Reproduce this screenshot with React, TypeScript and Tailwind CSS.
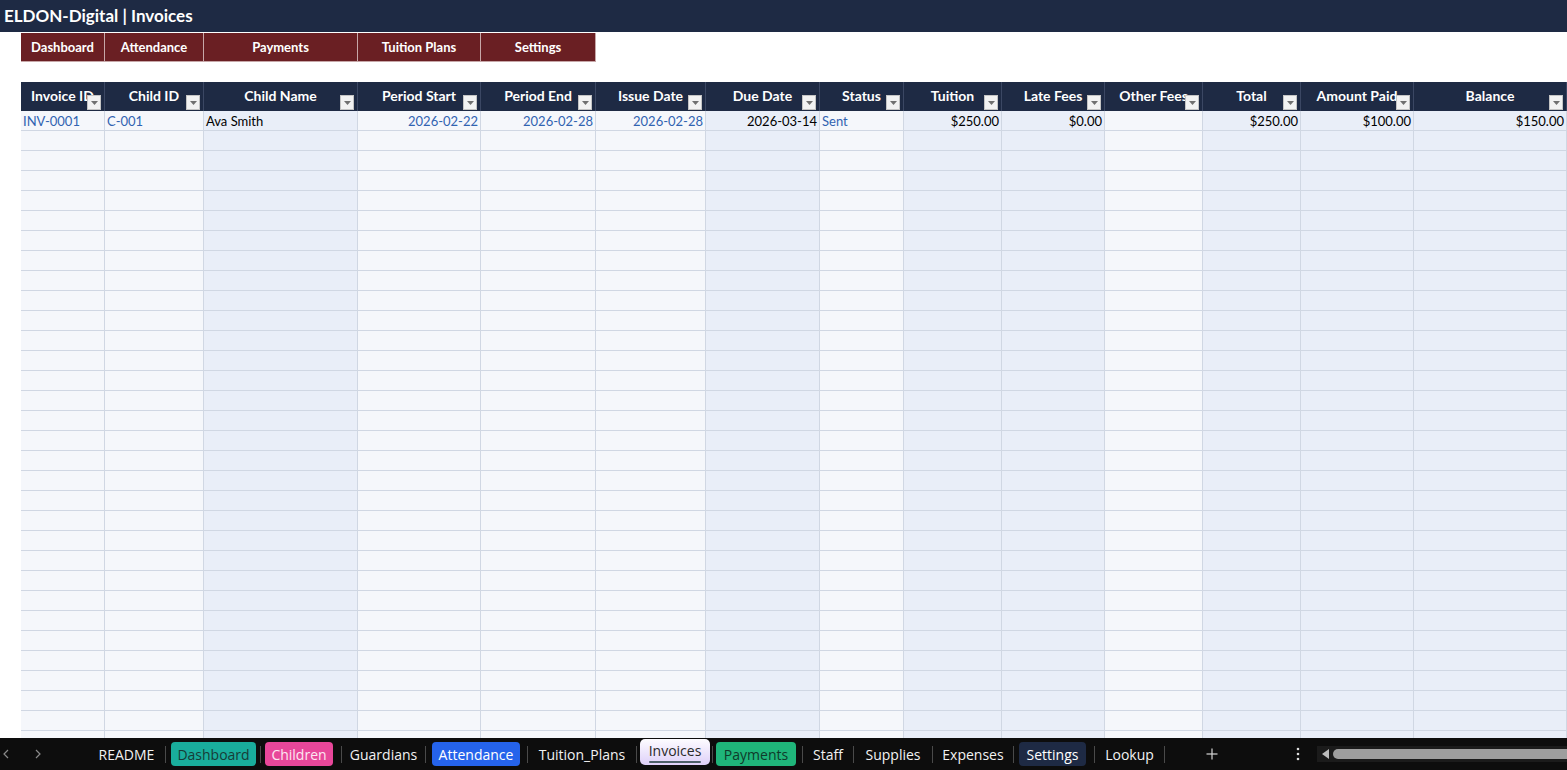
import React from 'react';

type Col = {
  name: string;
  w: string;
  shade: boolean;
};

const cols: Col[] = [
  { name: 'Invoice ID', w: 'w-[84px]', shade: false },
  { name: 'Child ID', w: 'w-[99px]', shade: false },
  { name: 'Child Name', w: 'w-[154px]', shade: true },
  { name: 'Period Start', w: 'w-[123px]', shade: false },
  { name: 'Period End', w: 'w-[115px]', shade: false },
  { name: 'Issue Date', w: 'w-[110px]', shade: false },
  { name: 'Due Date', w: 'w-[114px]', shade: true },
  { name: 'Status', w: 'w-[84px]', shade: false },
  { name: 'Tuition', w: 'w-[98px]', shade: true },
  { name: 'Late Fees', w: 'w-[103px]', shade: true },
  { name: 'Other Fees', w: 'w-[98px]', shade: false },
  { name: 'Total', w: 'w-[98px]', shade: true },
  { name: 'Amount Paid', w: 'w-[113px]', shade: true },
  { name: 'Balance', w: 'w-[153px]', shade: true },
];

// first invoice row: [text, right aligned, blue]
const firstRow: [string, boolean, boolean][] = [
  ['INV-0001', false, true],
  ['C-001', false, true],
  ['Ava Smith', false, false],
  ['2026-02-22', true, true],
  ['2026-02-28', true, true],
  ['2026-02-28', true, true],
  ['2026-03-14', true, false],
  ['Sent', false, true],
  ['$250.00', true, false],
  ['$0.00', true, false],
  ['', true, false],
  ['$250.00', true, false],
  ['$100.00', true, false],
  ['$150.00', true, false],
];

const navButtons = [
  { label: 'Dashboard', w: 'w-[84px]' },
  { label: 'Attendance', w: 'w-[99px]' },
  { label: 'Payments', w: 'w-[154px]' },
  { label: 'Tuition Plans', w: 'w-[123px]' },
  { label: 'Settings', w: 'w-[115px]' },
];

type Tab = {
  label: string;
  w: string;
  pill?: string;
  active?: boolean;
};

const tabs: Tab[] = [
  { label: 'README', w: 'w-[77px]' },
  { label: 'Dashboard', w: 'w-[94px]', pill: 'bg-[#19ad9c] text-[#173c37] ml-[5px] mr-[4px]' },
  { label: 'Children', w: 'w-[80px]', pill: 'bg-[#e8479a] text-[#fde7f2] ml-[4px] mr-[8px]' },
  { label: 'Guardians', w: 'w-[83px]' },
  { label: 'Attendance', w: 'w-[101px]', pill: 'bg-[#2563eb] text-white ml-[6px] mr-[7px]' },
  { label: 'Tuition_Plans', w: 'w-[108px]' },
  { label: 'Invoices', w: 'w-[74px]', active: true },
  { label: 'Payments', w: 'w-[89px]', pill: 'bg-[#1fb57a] text-[#0f3a2a] ml-[3px] mr-[6px]' },
  { label: 'Staff', w: 'w-[50px]' },
  { label: 'Supplies', w: 'w-[78px]' },
  { label: 'Expenses', w: 'w-[80px]' },
  { label: 'Settings', w: 'w-[80px]', pill: 'bg-[#1e2a44] text-white ml-[5px] mr-[8px]' },
  { label: 'Lookup', w: 'w-[69px]' },
];

function FilterButton() {
  return (
    <div className="absolute right-[3px] bottom-[1px] w-[14px] h-[15px] bg-[#f2f2f2] border border-[#c4c4c4] flex items-center justify-center">
      <svg width="7" height="4" viewBox="0 0 7 4">
        <polygon points="0,0 7,0 3.5,4" fill="#707070" />
      </svg>
    </div>
  );
}

function HeaderRow() {
  return (
    <div className="flex h-[29px] shrink-0">
      <div className="w-[21px] shrink-0 bg-white" />
      {cols.map((c) => (
        <div
          key={c.name}
          className={`${c.w} shrink-0 relative bg-[#1e2a44] border-r border-[#3b4763] overflow-hidden flex items-center justify-center pb-[2px]`}
        >
          <span className="text-white font-bold text-[14px] whitespace-nowrap">{c.name}</span>
          <FilterButton />
        </div>
      ))}
    </div>
  );
}

function DataRow({ index }: { index: number }) {
  return (
    <div className="flex h-[20px] shrink-0">
      <div className="w-[21px] shrink-0 bg-white" />
      {cols.map((c, i) => {
        const cell = index === 0 ? firstRow[i] : null;
        return (
          <div
            key={c.name}
            className={`${c.w} shrink-0 border-r border-b border-[#d0d7e3] overflow-hidden whitespace-nowrap text-[13px] leading-[20px] px-[2px] ${
              c.shade ? 'bg-[#e9eef8]' : 'bg-[#f5f7fb]'
            } ${cell && cell[1] ? 'text-right' : 'text-left'} ${cell && cell[2] ? 'text-[#3163b1]' : 'text-black'}`}
          >
            {cell ? cell[0] : ''}
          </div>
        );
      })}
    </div>
  );
}

function Separator() {
  return <div className="w-px h-[17px] bg-[#4a4a4a] shrink-0" />;
}

function TabBar() {
  return (
    <div className="h-[32px] shrink-0 bg-[#0d0d0d] flex items-center text-[14px] font-['Open_Sans',sans-serif]">
      <div className="w-[88px] shrink-0 flex items-center">
        <svg width="6" height="10" viewBox="0 0 6 10" className="ml-[3px]">
          <polyline points="5,1 1,5 5,9" fill="none" stroke="#8a8a8a" strokeWidth="1.2" />
        </svg>
        <svg width="6" height="10" viewBox="0 0 6 10" className="ml-[26px]">
          <polyline points="1,1 5,5 1,9" fill="none" stroke="#8a8a8a" strokeWidth="1.2" />
        </svg>
      </div>
      {tabs.map((t, i) => {
        const nextActive = tabs[i + 1] && tabs[i + 1].active;
        return (
          <React.Fragment key={t.label}>
            {t.active ? (
              <div className={`${t.w} shrink-0 self-stretch pt-[1px] pb-[5px] px-[2px]`}>
                <div className="h-full rounded-[5px] bg-gradient-to-b from-[#fdfcff] to-[#ded0f8] flex flex-col items-center pt-[2px]">
                  <span className="text-[#2a2a2a] font-medium leading-[19px]">{t.label}</span>
                  <span className="w-[52px] h-[2px] bg-[#4c5f68] rounded-full mt-[1px]" />
                </div>
              </div>
            ) : t.pill ? (
              <div className={`${t.w} shrink-0 flex`}>
                <div className={`flex-1 h-[24px] rounded-[4px] flex items-center justify-center ${t.pill}`}>
                  {t.label}
                </div>
              </div>
            ) : (
              <div className={`${t.w} shrink-0 text-center text-[#f2f2f2]`}>{t.label}</div>
            )}
            {!nextActive ? <Separator /> : <div className="w-[2px] shrink-0 flex justify-start"><Separator /></div>}
          </React.Fragment>
        );
      })}
      <div className="w-[94px] shrink-0 flex justify-center">
        <svg width="12" height="12" viewBox="0 0 12 12">
          <line x1="6" y1="0.5" x2="6" y2="11.5" stroke="#d6d6d6" strokeWidth="1.2" />
          <line x1="0.5" y1="6" x2="11.5" y2="6" stroke="#d6d6d6" strokeWidth="1.2" />
        </svg>
      </div>
      <div className="w-[58px] shrink-0 flex justify-end pr-[17px]">
        <svg width="4" height="14" viewBox="0 0 4 14">
          <circle cx="2" cy="2" r="1.3" fill="#dcdcdc" />
          <circle cx="2" cy="7" r="1.3" fill="#dcdcdc" />
          <circle cx="2" cy="12" r="1.3" fill="#dcdcdc" />
        </svg>
      </div>
      <div className="flex-1 h-[16px] bg-[#1b1b1b] flex items-center pl-[4px]">
        <svg width="9" height="10" viewBox="0 0 9 10" className="shrink-0">
          <polygon points="8,0 8,10 1,5" fill="#bdbdbd" />
        </svg>
        <div className="flex-1 h-[10px] bg-[#9e9e9e] rounded-l-full ml-[3px]" />
      </div>
    </div>
  );
}

export default function App() {
  const rows = Array.from({ length: 32 }, (_, i) => i);
  return (
    <div className="w-[1567px] h-[770px] overflow-hidden flex flex-col bg-white font-['Lato',sans-serif]">
      {/* Title bar */}
      <div className="h-[32px] shrink-0 bg-[#1e2a44] flex items-center px-[4px]">
        <h1 className="text-white font-bold text-[17px]">ELDON-Digital | Invoices</h1>
      </div>

      {/* Nav buttons */}
      <div className="flex mt-px h-[29px] shrink-0">
        <div className="w-[21px] shrink-0" />
        {navButtons.map((b) => (
          <div
            key={b.label}
            className={`${b.w} shrink-0 bg-[#6a1f23] border-r border-b border-[#c7a7a8] flex items-center justify-center text-white font-bold text-[13px] pt-[1px]`}
          >
            {b.label}
          </div>
        ))}
      </div>

      <div className="h-[20px] shrink-0" />

      {/* Invoice table */}
      <div className="flex-1 flex flex-col overflow-hidden">
        <HeaderRow />
        {rows.map((r) => (
          <DataRow key={r} index={r} />
        ))}
      </div>

      <TabBar />
    </div>
  );
}
